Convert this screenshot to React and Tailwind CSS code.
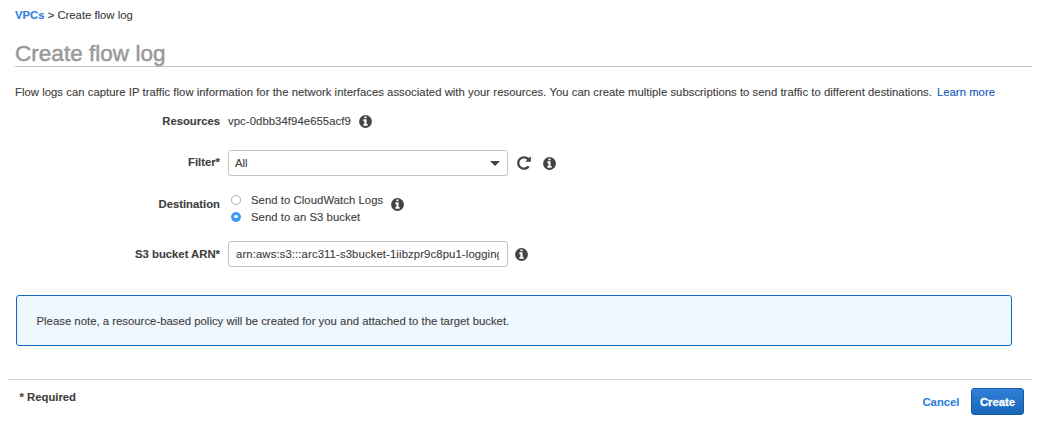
function InfoIcon() {
  return (
    <svg viewBox="0 0 1792 1792" className="block size-[15px] shrink-0" aria-hidden="true">
      <path
        fill="#444"
        fillRule="evenodd"
        d="M896 128a768 768 0 1 0 0 1536a768 768 0 1 0 0-1536zM1152 1376v-160q0-14-9-23t-23-9h-96v-512q0-14-9-23t-23-9h-320q-14 0-23 9t-9 23v160q0 14 9 23t23 9h96v320h-96q-14 0-23 9t-9 23v160q0 14 9 23t23 9h448q14 0 23-9t9-23zM1024 480v-160q0-14-9-23t-23-9h-192q-14 0-23 9t-9 23v160q0 14 9 23t23 9h192q14 0 23-9t9-23z"
      />
    </svg>
  );
}

function RefreshIcon() {
  return (
    <svg viewBox="0 0 1792 1792" className="block size-4 shrink-0" aria-hidden="true">
      <path
        fill="#444"
        d="M1664 256v448q0 26-19 45t-45 19h-448q-42 0-59-40-17-39 14-69l138-138q-148-137-349-137-104 0-198.5 40.5t-163.5 109.5-109.5 163.5-40.5 198.5 40.5 198.5 109.5 163.5 163.5 109.5 198.5 40.5q119 0 225-52t179-147q7-10 23-12 15 0 25 9l137 138q9 8 9.5 20.5t-7.5 22.5q-109 132-264 204.5t-327 72.5q-156 0-298-61t-245-164-164-245-61-298 61-298 164-245 245-164 298-61q147 0 284.5 55.5t244.5 156.5l130-129q29-31 70-14 39 17 39 59z"
      />
    </svg>
  );
}

function Label({ children }) {
  return <div className="w-[220px] shrink-0 text-right font-bold">{children}</div>;
}

function Radio({ checked, children }) {
  return (
    <label className="flex h-[17px] items-center">
      <span
        className={
          checked
            ? "flex size-[10px] items-center justify-center rounded-full bg-[#3b99fc]"
            : "size-[10px] rounded-full border border-[#b0b0b0] bg-white"
        }
      >
        {checked && <span className="size-[3.5px] rounded-full bg-white" />}
      </span>
      <span className="ml-[10px] tracking-[0.06px]">{children}</span>
    </label>
  );
}

export default function App() {
  return (
    <main className="flex h-[438px] w-[1046px] flex-col overflow-hidden bg-white font-['Liberation_Sans',Arial,sans-serif] text-[11.3px] leading-4 whitespace-nowrap text-[#404040] [-webkit-text-stroke:0.12px]">
      <nav className="mt-[7px] ml-[15px] h-4">
        <a className="font-bold text-[#3280dc]">VPCs</a> &gt; Create flow log
      </nav>
      <h1 className="mt-[15px] mr-[14px] ml-[15px] h-[29px] border-b border-[#c3c3c3] text-[22.5px] leading-[31px] tracking-[0.03px] text-[#999] [-webkit-text-stroke:0.5px]">
        Create flow log
      </h1>
      <p className="mt-[17px] ml-[15px] h-4 tracking-[0.035px]">
        Flow logs can capture IP traffic flow information for the network interfaces associated with your resources. You can
        create multiple subscriptions to send traffic to different destinations.
        <a className="ml-[5px] text-[#1258b8]">Learn more</a>
      </p>
      <div className="mt-[13px] flex h-4 items-center">
        <Label>Resources</Label>
        <span className="mr-[7px] ml-2 w-[123px] tracking-[0.08px]">vpc-0dbb34f94e655acf9</span>
        <InfoIcon />
      </div>
      <div className="mt-[21px] flex h-[26px] items-center">
        <Label>
          <span className="relative -top-px">Filter*</span>
        </Label>
        <div className="mr-2 ml-2 flex h-[26px] w-[280px] items-center justify-between rounded-[3px] border border-[#c4c4c4] pr-[7px] pl-[6px]">
          <span>All</span>
          <svg viewBox="0 0 10 5" className="h-[5px] w-[10px]" aria-hidden="true">
            <path d="M0 0h10L5 5z" fill="#444" />
          </svg>
        </div>
        <RefreshIcon />
        <span className="ml-[10px]">
          <InfoIcon />
        </span>
      </div>
      <div className="mt-[15px] flex h-[34px] items-start">
        <div className="pt-[5px]">
          <Label>Destination</Label>
        </div>
        <div className="ml-[11px] w-[159px]">
          <Radio>Send to CloudWatch Logs</Radio>
          <Radio checked>Send to an S3 bucket</Radio>
        </div>
        <div className="pt-[6px]">
          <InfoIcon />
        </div>
      </div>
      <div className="mt-4 flex h-[26px] items-center">
        <Label>S3 bucket ARN*</Label>
        <div className="mr-[6px] ml-2 flex h-[26px] w-[280px] items-center rounded-[3px] border border-[#c4c4c4] pr-2 pl-[7px]">
          <span className="w-full overflow-hidden tracking-[0.12px]">arn:aws:s3:::arc311-s3bucket-1iibzpr9c8pu1-logging</span>
        </div>
        <InfoIcon />
      </div>
      <div className="mt-7 ml-4 flex h-[51px] w-[996px] items-center rounded-[3px] border border-[#0f6abf] bg-[#f0f8ff] pl-[19.5px] tracking-[0.025px]">
        Please note, a resource-based policy will be created for you and attached to the target bucket.
      </div>
      <footer className="mt-[33px] mr-[14px] ml-2 flex h-[58px] justify-between border-t border-[#d8d8d8] pr-2 pl-[11.5px]">
        <span className="mt-[9px] font-bold">* Required</span>
        <div className="mt-2 flex h-[27px] items-center gap-[11.5px] font-bold">
          <a className="text-[#3280dc]">Cancel</a>
          <button className="h-[27px] w-[53px] rounded-[3px] border border-[#165aa8] bg-linear-to-b from-[#2f80d8] to-[#1767b8] text-white [-webkit-text-stroke:0.3px]">
            Create
          </button>
        </div>
      </footer>
    </main>
  );
}
